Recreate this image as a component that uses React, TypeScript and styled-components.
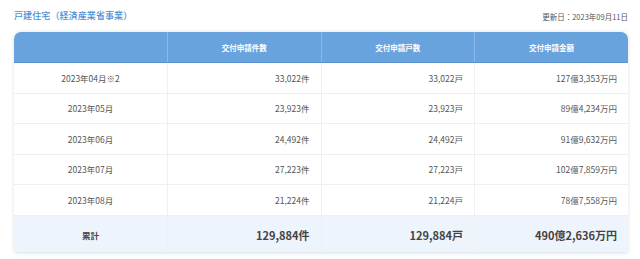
import { createGlobalStyle } from "styled-components";
import styled from "styled-components";

const GlobalStyle = createGlobalStyle`
  html, body {
    margin: 0;
    padding: 0;
    background: #ffffff;
  }
  body {
    font-family: "Noto Sans CJK JP", "Noto Sans", sans-serif;
    color: #555;
  }
`;

const Page = styled.div`
  width: 640px;
  height: 259px;
  box-sizing: border-box;
  padding: 8px 12px 0 14px;
`;

const TitleBar = styled.div`
  display: flex;
  align-items: center;
  justify-content: space-between;
  height: 15px;
  margin-bottom: 9px;
`;

const Title = styled.h2`
  margin: 0;
  font-size: 9px;
  font-weight: 500;
  color: #4d8fd6;
  letter-spacing: 0.1px;
`;

const Updated = styled.span`
  font-size: 7.5px;
  color: #555;
  padding-top: 1px;
`;

const TableCard = styled.div`
  border-radius: 7px 7px 3px 3px;
  box-shadow: 0 0 4px rgba(0, 0, 0, 0.12);
  overflow: hidden;
`;

const Table = styled.table`
  width: 100%;
  border-collapse: collapse;
  table-layout: fixed;
`;

const HeadCell = styled.th`
  height: 30px;
  padding: 0;
  background: #68a3de;
  color: #ffffff;
  font-size: 7.5px;
  font-weight: 700;
  text-align: center;
  border-left: 1px solid #8ab8e8;
  border-bottom: 1px solid #5a94d0;
  &:first-child {
    border-left: none;
  }
`;

const Row = styled.tr<{ $total?: boolean }>`
  background: ${(p) => (p.$total ? "#eef4fb" : "#ffffff")};
  border-top: 1px solid #eeeeee;
  border-bottom: ${(p) => (p.$total ? "1px solid #e2eaf3" : "none")};
  &:first-child {
    border-top: none;
  }
`;

const Cell = styled.td<{ $total?: boolean; $label?: boolean }>`
  height: ${(p) => (p.$total ? "34px" : "29.5px")};
  padding: ${(p) => (p.$total ? "2px 11px 0" : "0 11px")};
  font-size: ${(p) => (p.$total && !p.$label ? "11px" : "8.5px")};
  font-weight: ${(p) => (p.$total ? 700 : 400)};
  color: ${(p) => (p.$total ? "#444" : "#555")};
  text-align: ${(p) => (p.$label ? "center" : "right")};
  border-left: 1px solid #f0f0f0;
  &:first-child {
    border-left: none;
  }
`;

const rows = [
  ["2023年04月※2", "33,022件", "33,022戸", "127億3,353万円"],
  ["2023年05月", "23,923件", "23,923戸", "89億4,234万円"],
  ["2023年06月", "24,492件", "24,492戸", "91億9,632万円"],
  ["2023年07月", "27,223件", "27,223戸", "102億7,859万円"],
  ["2023年08月", "21,224件", "21,224戸", "78億7,558万円"],
];

const total = ["累計", "129,884件", "129,884戸", "490億2,636万円"];

export default function App() {
  return (
    <Page>
      <GlobalStyle />
      <TitleBar>
        <Title>戸建住宅（経済産業省事業）</Title>
        <Updated>更新日：2023年09月11日</Updated>
      </TitleBar>
      <TableCard>
        <Table>
          <thead>
            <tr>
              <HeadCell></HeadCell>
              <HeadCell>交付申請件数</HeadCell>
              <HeadCell>交付申請戸数</HeadCell>
              <HeadCell>交付申請金額</HeadCell>
            </tr>
          </thead>
          <tbody>
            {rows.map((r) => (
              <Row key={r[0]}>
                {r.map((v, i) => (
                  <Cell key={i} $label={i === 0}>
                    {v}
                  </Cell>
                ))}
              </Row>
            ))}
            <Row $total>
              {total.map((v, i) => (
                <Cell key={i} $total $label={i === 0}>
                  {v}
                </Cell>
              ))}
            </Row>
          </tbody>
        </Table>
      </TableCard>
    </Page>
  );
}
